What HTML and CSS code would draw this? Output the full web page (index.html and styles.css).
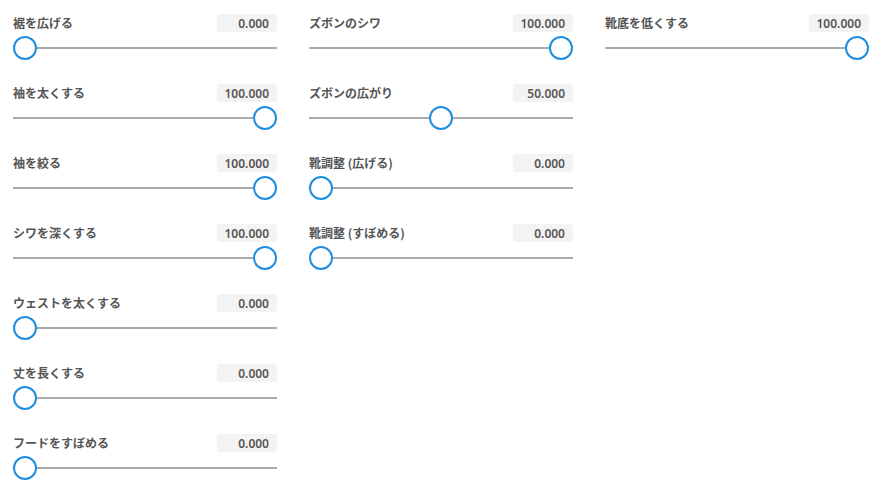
FILE: index.html
```html
<!DOCTYPE html>
<html lang="ja">
<head>
<meta charset="utf-8">
<link rel="stylesheet" href="styles.css">
</head>
<body>
<div class="panel">
  <div class="col">
    <div class="item"><div class="head"><span class="label">裾を広げる</span><span class="value">0.000</span></div><div class="slider"><div class="track"></div><div class="thumb" style="--v: 0"></div></div></div>
    <div class="item"><div class="head"><span class="label">袖を太くする</span><span class="value">100.000</span></div><div class="slider"><div class="track"></div><div class="thumb" style="--v: 1"></div></div></div>
    <div class="item"><div class="head"><span class="label">袖を絞る</span><span class="value">100.000</span></div><div class="slider"><div class="track"></div><div class="thumb" style="--v: 1"></div></div></div>
    <div class="item"><div class="head"><span class="label">シワを深くする</span><span class="value">100.000</span></div><div class="slider"><div class="track"></div><div class="thumb" style="--v: 1"></div></div></div>
    <div class="item"><div class="head"><span class="label">ウェストを太くする</span><span class="value">0.000</span></div><div class="slider"><div class="track"></div><div class="thumb" style="--v: 0"></div></div></div>
    <div class="item"><div class="head"><span class="label">丈を長くする</span><span class="value">0.000</span></div><div class="slider"><div class="track"></div><div class="thumb" style="--v: 0"></div></div></div>
    <div class="item"><div class="head"><span class="label">フードをすぼめる</span><span class="value">0.000</span></div><div class="slider"><div class="track"></div><div class="thumb" style="--v: 0"></div></div></div>
  </div>
  <div class="col">
    <div class="item"><div class="head"><span class="label">ズボンのシワ</span><span class="value">100.000</span></div><div class="slider"><div class="track"></div><div class="thumb" style="--v: 1"></div></div></div>
    <div class="item"><div class="head"><span class="label">ズボンの広がり</span><span class="value">50.000</span></div><div class="slider"><div class="track"></div><div class="thumb" style="--v: 0.5"></div></div></div>
    <div class="item"><div class="head"><span class="label">靴調整 (広げる)</span><span class="value">0.000</span></div><div class="slider"><div class="track"></div><div class="thumb" style="--v: 0"></div></div></div>
    <div class="item"><div class="head"><span class="label">靴調整 (すぼめる)</span><span class="value">0.000</span></div><div class="slider"><div class="track"></div><div class="thumb" style="--v: 0"></div></div></div>
  </div>
  <div class="col">
    <div class="item"><div class="head"><span class="label">靴底を低くする</span><span class="value">100.000</span></div><div class="slider"><div class="track"></div><div class="thumb" style="--v: 1"></div></div></div>
  </div>
</div>
</body>
</html>
```

FILE: styles.css
```css
html, body {
  margin: 0;
  padding: 0;
  background: #ffffff;
}
body {
  font-family: "Noto Sans CJK JP", "Noto Sans", sans-serif;
  color: #555555;
}
.panel {
  display: grid;
  grid-template-columns: repeat(3, 264px);
  column-gap: 32px;
  align-items: start;
  padding: 14px 0 0 13px;
}
.col {
  display: flex;
  flex-direction: column;
}
.item {
  height: 70px;
  display: flex;
  flex-direction: column;
}
.head {
  display: flex;
  justify-content: space-between;
  align-items: center;
  height: 18px;
}
.label {
  font-size: 12px;
  font-weight: 700;
  line-height: 18px;
  color: #555555;
}
.value {
  width: 60px;
  height: 18px;
  box-sizing: border-box;
  padding: 1px 8px 0 0;
  text-align: right;
  background: #f3f3f3;
  border-radius: 3px;
  font-family: "Noto Sans", "Noto Sans CJK JP", sans-serif;
  font-size: 12px;
  font-weight: 600;
  line-height: 17px;
  color: #555555;
}
.slider {
  position: relative;
  height: 24px;
  margin-top: 4px;
}
.track {
  position: absolute;
  left: 0;
  right: 0;
  top: 11px;
  height: 2px;
  background: #aaaaaa;
}
.thumb {
  position: absolute;
  top: 0;
  left: calc(var(--v, 0) * (100% - 24px));
  width: 24px;
  height: 24px;
  box-sizing: border-box;
  border: 2px solid #1e8ee0;
  border-radius: 50%;
  background: #ffffff;
}
```
